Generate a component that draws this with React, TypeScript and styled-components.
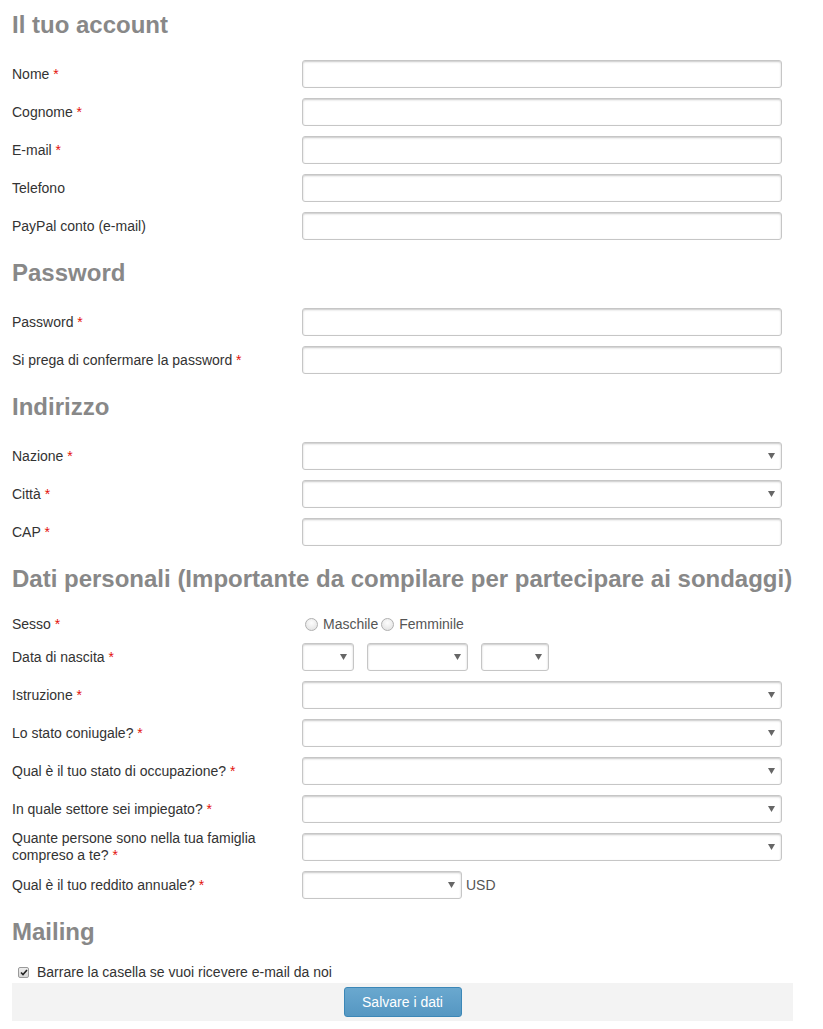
import React from "react";
import styled, { createGlobalStyle } from "styled-components";

const GlobalStyle = createGlobalStyle`
  body {
    margin: 0;
    background: #fff;
    font-family: "Liberation Sans", Arial, sans-serif;
    color: #333;
  }
`;

const Page = styled.div`
  width: 781px;
  padding: 9px 0 0 12px;
`;

const Heading = styled.h2<{ $tight?: boolean }>`
  margin: 17px 0 ${(p) => (p.$tight ? "13px" : "19px")};
  font-size: 24px;
  line-height: 32px;
  font-weight: bold;
  color: #888;
  white-space: nowrap;
  &:first-child {
    margin-top: 0;
  }
`;

const Row = styled.div<{ $height?: number }>`
  display: flex;
  align-items: center;
  height: ${(p) => p.$height ?? 28}px;
  margin-bottom: ${(p) => (p.$height && p.$height < 28 ? 9 : 10)}px;
`;

const Label = styled.label`
  width: 260px;
  padding-right: 30px;
  font-size: 14px;
  line-height: 17px;
  color: #333;
`;

const Req = styled.span`
  color: #e3120b;
`;

const Field = styled.div`
  display: flex;
  align-items: center;
  gap: 13px;
  flex: 1;
`;

const fieldLook = `
  box-sizing: border-box;
  height: 28px;
  border: 1px solid #c6c6c6;
  border-radius: 3px;
  background: #fff;
  box-shadow: inset 0 1px 2px rgba(0, 0, 0, 0.22);
`;

const TextInput = styled.input`
  ${fieldLook}
  width: 480px;
  padding: 0 6px;
  font: 14px "Liberation Sans", Arial, sans-serif;
  outline: none;
`;

const SelectBox = styled.div<{ $width?: number }>`
  ${fieldLook}
  width: ${(p) => p.$width ?? 480}px;
  display: flex;
  align-items: center;
  justify-content: flex-end;
  padding-right: 6px;
`;

const Arrow = styled.svg`
  width: 7px;
  height: 6px;
  fill: #666;
`;

const Select: React.FC<{ width?: number }> = ({ width }) => (
  <SelectBox $width={width}>
    <Arrow viewBox="0 0 7 6">
      <path d="M0 0h7L3.5 6z" />
    </Arrow>
  </SelectBox>
);

const RadioGroup = styled.div`
  display: flex;
  align-items: center;
  font-size: 14px;
  color: #555;
`;

const RadioDot = styled.span`
  display: inline-block;
  box-sizing: border-box;
  width: 13px;
  height: 13px;
  margin: 0 5px 0 3px;
  border: 1px solid #b0b0b0;
  border-radius: 50%;
  background: radial-gradient(circle at 50% 35%, #fdfdfd, #dedede);
`;

const Suffix = styled.span`
  font-size: 14px;
  color: #555;
  margin-left: -9px;
`;

const CheckRow = styled.div`
  display: flex;
  align-items: center;
  height: 22px;
  padding-left: 6px;
  font-size: 14px;
  color: #333;
`;

const CheckBox = styled.span`
  box-sizing: border-box;
  width: 11px;
  height: 11px;
  margin-right: 8px;
  border: 1px solid #9a9a9a;
  border-radius: 2px;
  background: linear-gradient(#eee, #d6d6d6);
  display: flex;
  align-items: center;
  justify-content: center;
`;

const Footer = styled.div`
  display: flex;
  justify-content: center;
  align-items: center;
  height: 38px;
  background: #f3f3f3;
`;

const SaveButton = styled.button`
  box-sizing: border-box;
  width: 118px;
  height: 30px;
  border: 1px solid #3b87b7;
  border-radius: 3px;
  background: linear-gradient(#6aa8cf, #5597c2);
  color: #fff;
  font: 14px "Liberation Sans", Arial, sans-serif;
`;

type Item = { label: string; req?: boolean; kind?: "text" | "select" };

const FieldRow: React.FC<Item> = ({ label, req, kind = "text" }) => (
  <Row>
    <Label>
      {label}
      {req && <Req> *</Req>}
    </Label>
    <Field>{kind === "select" ? <Select /> : <TextInput />}</Field>
  </Row>
);

const account: Item[] = [
  { label: "Nome", req: true },
  { label: "Cognome", req: true },
  { label: "E-mail", req: true },
  { label: "Telefono" },
  { label: "PayPal conto (e-mail)" },
];

const password: Item[] = [
  { label: "Password", req: true },
  { label: "Si prega di confermare la password", req: true },
];

const address: Item[] = [
  { label: "Nazione", req: true, kind: "select" },
  { label: "Città", req: true, kind: "select" },
  { label: "CAP", req: true },
];

const personal: Item[] = [
  { label: "Istruzione", req: true, kind: "select" },
  { label: "Lo stato coniugale?", req: true, kind: "select" },
  { label: "Qual è il tuo stato di occupazione?", req: true, kind: "select" },
  { label: "In quale settore sei impiegato?", req: true, kind: "select" },
  {
    label: "Quante persone sono nella tua famiglia compreso a te?",
    req: true,
    kind: "select",
  },
];

const App: React.FC = () => {
  return (
    <Page>
      <GlobalStyle />
      <Heading>Il tuo account</Heading>
      {account.map((f) => (
        <FieldRow key={f.label} {...f} />
      ))}

      <Heading>Password</Heading>
      {password.map((f) => (
        <FieldRow key={f.label} {...f} />
      ))}

      <Heading>Indirizzo</Heading>
      {address.map((f) => (
        <FieldRow key={f.label} {...f} />
      ))}

      <Heading>
        Dati personali (Importante da compilare per partecipare ai sondaggi)
      </Heading>
      <Row $height={20}>
        <Label>
          Sesso<Req> *</Req>
        </Label>
        <RadioGroup>
          <RadioDot />
          Maschile
          <RadioDot />
          Femminile
        </RadioGroup>
      </Row>
      <Row>
        <Label>
          Data di nascita<Req> *</Req>
        </Label>
        <Field>
          <Select width={52} />
          <Select width={101} />
          <Select width={68} />
        </Field>
      </Row>
      {personal.map((f) => (
        <FieldRow key={f.label} {...f} />
      ))}
      <Row>
        <Label>
          Qual è il tuo reddito annuale?<Req> *</Req>
        </Label>
        <Field>
          <Select width={160} />
          <Suffix>USD</Suffix>
        </Field>
      </Row>

      <Heading $tight>Mailing</Heading>
      <CheckRow>
        <CheckBox>
          <svg width="8" height="7" viewBox="0 0 8 7">
            <path
              d="M1 3.5l2 2L7 1"
              fill="none"
              stroke="#222"
              strokeWidth="1.6"
            />
          </svg>
        </CheckBox>
        Barrare la casella se vuoi ricevere e-mail da noi
      </CheckRow>
      <Footer>
        <SaveButton>Salvare i dati</SaveButton>
      </Footer>
    </Page>
  );
};

export default App;
